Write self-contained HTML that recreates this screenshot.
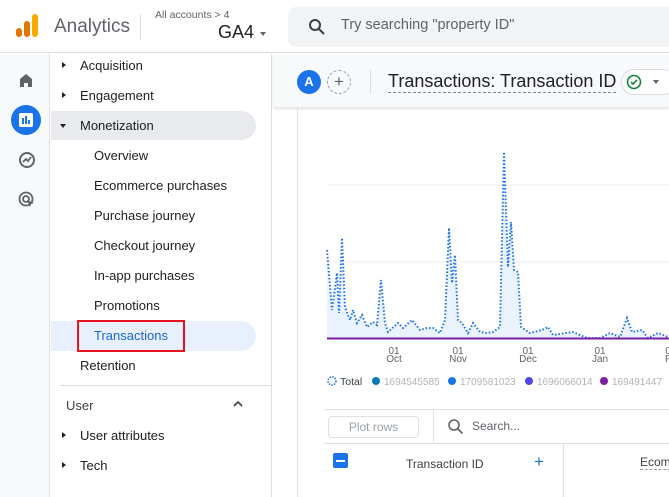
<!DOCTYPE html>
<html><head><style>
*{margin:0;padding:0;box-sizing:border-box}
body{width:669px;height:497px;overflow:hidden;background:#fff;font-family:"Liberation Sans",sans-serif;position:relative;color:#202124}
.a{position:absolute}
.nav{font-size:13px;color:#202124;white-space:nowrap}
.tri{position:absolute;width:0;height:0;border-top:3.5px solid transparent;border-bottom:3.5px solid transparent;border-left:4px solid #202124}
.trid{position:absolute;width:0;height:0;border-left:3.5px solid transparent;border-right:3.5px solid transparent;border-top:4px solid #202124}
</style></head><body>
<div class="a" style="left:0;top:0;width:669px;height:53px;background:#fff;border-bottom:1px solid #e0e0e0"></div>
<div class="a" style="left:16px;top:28px;width:6px;height:9px;background:#e37400;border-radius:3px"></div>
<div class="a" style="left:24px;top:21px;width:6px;height:16px;background:#e37400;border-radius:3px"></div>
<div class="a" style="left:32px;top:14px;width:6px;height:23px;background:#f9ab00;border-radius:3px"></div>
<div class="a" style="left:54px;top:16px;font-size:19px;color:#5f6368">Analytics</div>
<div class="a" style="left:140px;top:14px;width:1px;height:26px;background:#dadce0"></div>
<div class="a" style="left:155px;top:9px;font-size:10.5px;color:#5f6368">All accounts &gt; 4</div>
<div class="a" style="left:218px;top:22px;font-size:18px;color:#202124">GA4</div>
<div class="trid" style="left:260px;top:32px;border-top-color:#5f6368"></div>
<div class="a" style="left:288px;top:7px;width:390px;height:40px;background:#f1f3f4;border-radius:8px"></div>
<svg class="a" style="left:308px;top:18px" width="18" height="18" viewBox="0 0 18 18"><circle cx="7" cy="7" r="5" fill="none" stroke="#3c4043" stroke-width="2"/><path d="M11 11l5 5" stroke="#3c4043" stroke-width="2"/></svg>
<div class="a" style="left:341px;top:17px;font-size:14.5px;color:#5f6368">Try searching "property ID"</div>
<div class="a" style="left:0;top:54px;width:50px;height:443px;background:#f8f9fa;border-right:1px solid #e0e0e0"></div>
<svg class="a" style="left:18px;top:72px" width="16" height="16" viewBox="0 0 16 16"><path d="M2 7L8 2l6 5v8H10v-4H6v4H2z" fill="#5f6368"/></svg>
<div class="a" style="left:11px;top:105px;width:30px;height:30px;border-radius:50%;background:#1a73e8"></div>
<div class="a" style="left:19px;top:113px;width:14px;height:14px;background:#fff;border-radius:2px"></div>
<div class="a" style="left:22px;top:118px;width:2px;height:6px;background:#1a73e8"></div>
<div class="a" style="left:25px;top:116px;width:2px;height:8px;background:#1a73e8"></div>
<div class="a" style="left:28px;top:120px;width:2px;height:4px;background:#1a73e8"></div>
<svg class="a" style="left:18px;top:151px" width="18" height="18" viewBox="0 0 18 18"><circle cx="9" cy="9" r="7" fill="none" stroke="#5f6368" stroke-width="2"/><path d="M5 11l3-3 2 2 3-4" fill="none" stroke="#5f6368" stroke-width="1.8"/></svg>
<svg class="a" style="left:18px;top:191px" width="18" height="18" viewBox="0 0 18 18"><circle cx="8" cy="8" r="6.5" fill="none" stroke="#5f6368" stroke-width="1.8"/><circle cx="8" cy="8" r="3" fill="none" stroke="#5f6368" stroke-width="1.8"/><path d="M9 9l7 3-3 1-1 3z" fill="#5f6368"/></svg>
<div class="a" style="left:51px;top:54px;width:221px;height:443px;background:#fff;border-right:1px solid #e0e0e0"></div>
<div class="a" style="left:51px;top:111px;width:205px;height:29px;background:#e8eaed;border-radius:0 15px 15px 0"></div>
<div class="a" style="left:51px;top:321px;width:205px;height:30px;background:#e8f0fe;border-radius:0 15px 15px 0"></div>
<div class="tri" style="left:62px;top:62px"></div><div class="a nav" style="left:80px;top:58px">Acquisition</div>
<div class="tri" style="left:62px;top:92px"></div><div class="a nav" style="left:80px;top:88px">Engagement</div>
<div class="trid" style="left:60px;top:124px"></div><div class="a nav" style="left:80px;top:118px">Monetization</div>
<div class="a nav" style="left:94px;top:148px">Overview</div>
<div class="a nav" style="left:94px;top:178px">Ecommerce purchases</div>
<div class="a nav" style="left:94px;top:208px">Purchase journey</div>
<div class="a nav" style="left:94px;top:238px">Checkout journey</div>
<div class="a nav" style="left:94px;top:268px">In-app purchases</div>
<div class="a nav" style="left:94px;top:298px">Promotions</div>
<div class="a nav" style="left:94px;top:328px;color:#1967d2">Transactions</div>
<div class="a" style="left:77px;top:320px;width:108px;height:32px;border:2.5px solid #e8141b"></div>
<div class="a nav" style="left:80px;top:358px">Retention</div>
<div class="a" style="left:60px;top:385px;width:212px;height:1px;background:#dadce0"></div>
<div class="a nav" style="left:66px;top:398px;color:#3c4043">User</div>
<svg class="a" style="left:232px;top:400px" width="12" height="8" viewBox="0 0 12 8"><path d="M2 6l4-4 4 4" fill="none" stroke="#3c4043" stroke-width="1.6"/></svg>
<div class="tri" style="left:62px;top:432px"></div><div class="a nav" style="left:80px;top:428px">User attributes</div>
<div class="tri" style="left:62px;top:462px"></div><div class="a nav" style="left:80px;top:458px">Tech</div>
<div class="a" style="left:273px;top:54px;width:396px;height:53px;background:#f8f9fa;box-shadow:0 2px 3px rgba(0,0,0,.12)"></div>
<div class="a" style="left:297px;top:70px;width:24px;height:24px;border-radius:50%;background:#1a73e8;color:#fff;font-size:13px;font-weight:bold;text-align:center;line-height:24px">A</div>
<div class="a" style="left:327px;top:70px;width:24px;height:24px;border-radius:50%;border:1px dashed #9aa0a6;color:#5f6368;font-size:17px;text-align:center;line-height:21px">+</div>
<div class="a" style="left:370px;top:70px;width:1px;height:24px;background:#dadce0"></div>
<div class="a" style="left:388px;top:70px;font-size:18px;color:#202124;border-bottom:1.5px dashed #80868b;line-height:22px">Transactions: Transaction ID</div>
<div class="a" style="left:621px;top:69px;width:55px;height:26px;border:1px solid #dadce0;border-radius:13px;background:#fff"></div>
<svg class="a" style="left:626px;top:74px" width="16" height="16" viewBox="0 0 16 16"><circle cx="8" cy="8" r="6.5" fill="none" stroke="#188038" stroke-width="1.6"/><path d="M5 8l2 2 4-4" fill="none" stroke="#188038" stroke-width="1.6"/></svg>
<div class="trid" style="left:653px;top:80px;border-top-color:#5f6368"></div>
<div class="a" style="left:297px;top:108px;width:1px;height:389px;background:#e0e0e0"></div>
<svg class="a" style="left:0;top:0" width="669" height="497">
<line x1="327" y1="185" x2="669" y2="185" stroke="#eee"/>
<line x1="327" y1="262" x2="669" y2="262" stroke="#eee"/>
<polygon fill="#eaf2fd" points="327,250 332,310 337,273 339,313 342,238 345,307 350,320 353,310 357,323 362,315 367,327 373,322 377,325 381,280 385,323 388,332 398,323 403,328 412,320 420,330 427,328 433,328 440,333 445,320 449,228 452,283 455,255 458,320 462,323 468,333 473,323 480,332 487,333 493,332 500,327 504,152 508,267 511,222 514,270 518,272 521,327 530,333 542,330 548,327 553,335 573,332 587,338 600,338 610,333 620,337 627,318 632,332 642,330 648,338 658,333 668,337 668,338 327,338"/>
<polyline fill="none" stroke="#1a73e8" stroke-width="2" stroke-dasharray="1.5 2" points="327,250 332,310 337,273 339,313 342,238 345,307 350,320 353,310 357,323 362,315 367,327 373,322 377,325 381,280 385,323 388,332 398,323 403,328 412,320 420,330 427,328 433,328 440,333 445,320 449,228 452,283 455,255 458,320 462,323 468,333 473,323 480,332 487,333 493,332 500,327 504,152 508,267 511,222 514,270 518,272 521,327 530,333 542,330 548,327 553,335 573,332 587,338 600,338 610,333 620,337 627,318 632,332 642,330 648,338 658,333 668,337"/>
<line x1="327" y1="338.5" x2="669" y2="338.5" stroke="#7b1fa2" stroke-width="2"/>
<g font-family="Liberation Sans" font-size="10" fill="#5f6368" text-anchor="middle">
<text x="394" y="354">01</text><text x="394" y="362">Oct</text>
<text x="458" y="354">01</text><text x="458" y="362">Nov</text>
<text x="528" y="354">01</text><text x="528" y="362">Dec</text>
<text x="600" y="354">01</text><text x="600" y="362">Jan</text>
<text x="668" y="354">0</text><text x="668" y="362">F</text>
</g>
<circle cx="332" cy="381" r="4" fill="none" stroke="#1a73e8" stroke-dasharray="1.5 1.2" stroke-width="1.5"/>
<text x="340" y="385" font-family="Liberation Sans" font-size="10.5" fill="#3c4043">Total</text>
<circle cx="376" cy="381" r="4" fill="#0b79b7"/>
<circle cx="452" cy="381" r="4" fill="#1a73e8"/>
<circle cx="529" cy="381" r="4" fill="#4f46e5"/>
<circle cx="604" cy="381" r="4" fill="#7b1fa2"/>
<g font-family="Liberation Sans" font-size="10" fill="#b0b4b8"><text x="384" y="385">1694545585</text><text x="460" y="385">1709581023</text><text x="537" y="385">1696066014</text><text x="612" y="385">169491447</text></g>
</svg>
<div class="a" style="left:324px;top:409px;width:345px;height:1px;background:#e0e0e0"></div>
<div class="a" style="left:324px;top:443px;width:345px;height:1px;background:#e0e0e0"></div>
<div class="a" style="left:433px;top:410px;width:1px;height:33px;background:#e0e0e0"></div>
<div class="a" style="left:563px;top:444px;width:1px;height:53px;background:#e0e0e0"></div>
<div class="a" style="left:328px;top:416px;width:91px;height:22px;border:1px solid #e0e0e0;border-radius:4px;color:#9aa0a6;font-size:12px;text-align:center;line-height:20px">Plot rows</div>
<svg class="a" style="left:447px;top:418px" width="17" height="17" viewBox="0 0 17 17"><circle cx="7" cy="7" r="5" fill="none" stroke="#5f6368" stroke-width="1.6"/><path d="M10.5 10.5l5 5" stroke="#5f6368" stroke-width="1.6"/></svg>
<div class="a" style="left:472px;top:419px;font-size:12px;color:#5f6368">Search...</div>
<div class="a" style="left:333px;top:453px;width:15px;height:15px;background:#1a73e8;border-radius:2px"></div>
<div class="a" style="left:336px;top:460px;width:9px;height:2px;background:#fff"></div>
<div class="a" style="left:406px;top:457px;font-size:12px;color:#3c4043">Transaction ID</div>
<div class="a" style="left:534px;top:452px;font-size:17px;color:#1a73e8">+</div>
<div class="a" style="left:640px;top:455px;font-size:12px;color:#3c4043;border-bottom:1px dashed #9aa0a6">Ecom</div>
</body></html>
